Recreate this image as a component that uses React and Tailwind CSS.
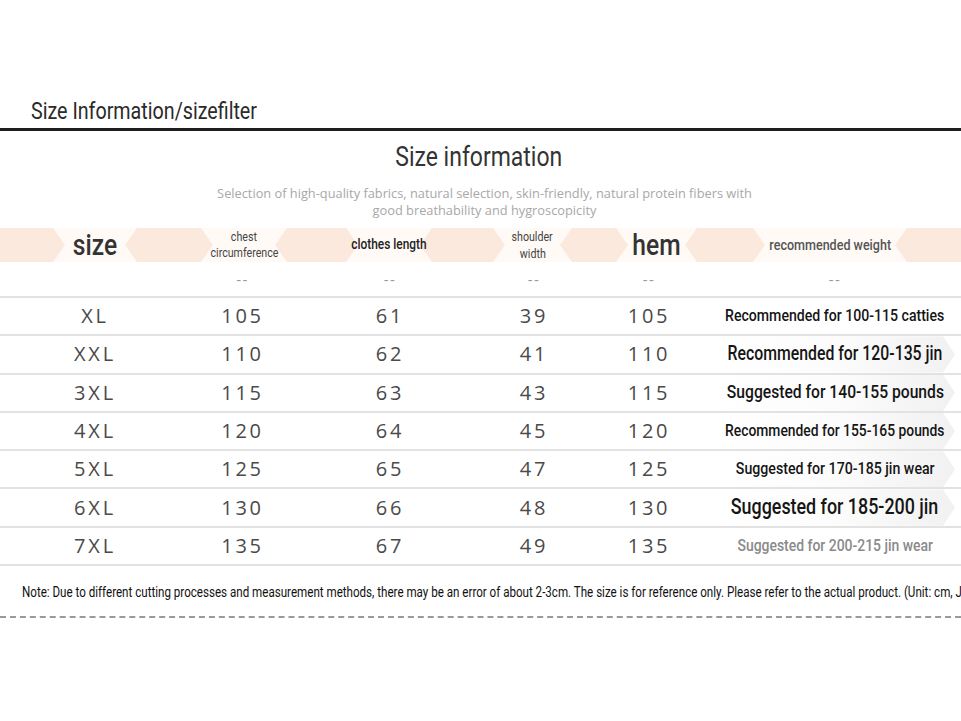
import React from "react";

const cond = "font-['Roboto','Liberation_Sans',sans-serif]";
const round = "font-['Open_Sans','DejaVu_Sans',sans-serif]";

const hex = "[clip-path:polygon(12px_0,calc(100%-12px)_0,100%_50%,calc(100%-12px)_100%,12px_100%,0_50%)]";

// condensed look: Roboto squeezed horizontally
const N = ({ className = "", origin = "origin-center", squeeze = "scale-x-[0.82]", children }) => (
  <span className={`inline-block whitespace-nowrap ${squeeze} ${origin} ${cond} ${className}`}>{children}</span>
);

const rows = [
  { size: "XL", chest: "105", length: "61", shoulder: "39", hem: "105", weight: "Recommended for 100-115 catties", cls: "text-[17.2px]" },
  { size: "XXL", chest: "110", length: "62", shoulder: "41", hem: "110", weight: "Recommended for 120-135 jin", cls: "text-[19.3px]" },
  { size: "3XL", chest: "115", length: "63", shoulder: "43", hem: "115", weight: "Suggested for 140-155 pounds", cls: "text-[19.1px]" },
  { size: "4XL", chest: "120", length: "64", shoulder: "45", hem: "120", weight: "Recommended for 155-165 pounds", cls: "text-[16.9px]" },
  { size: "5XL", chest: "125", length: "65", shoulder: "47", hem: "125", weight: "Suggested for 170-185 jin wear", cls: "text-[17.3px]" },
  { size: "6XL", chest: "130", length: "66", shoulder: "48", hem: "130", weight: "Suggested for 185-200 jin", cls: "text-[21.8px]" },
  { size: "7XL", chest: "135", length: "67", shoulder: "49", hem: "135", weight: "Suggested for 200-215 jin wear", cls: "text-[17px] !text-[#8a8a8a]" },
];

const cols = "grid grid-cols-[190px_105px_190px_98px_132px_240px_6px]";
const num = `${round} text-center text-[20px] tracking-[0.14em] text-[#4a4a4a]`;

const HeaderBand = () => (
  <div className="flex h-[34px] bg-[#fffaf6]">
    <div className="w-[65px] shrink-0 bg-[#fbe9dd] [clip-path:polygon(0_0,calc(100%-12px)_0,100%_50%,calc(100%-12px)_100%,0_100%)]" />
    <div className="relative z-10 w-[60px] shrink-0 flex items-center justify-center">
      <N className="text-[30px] font-medium text-[#333] leading-none">size</N>
    </div>
    <div className={`w-[88px] shrink-0 bg-[#fbe9dd] ${hex}`} />
    <div className="relative z-10 w-[62px] shrink-0 flex flex-col items-center justify-center leading-[16px]">
      <N className="text-[13px] text-[#444]">chest</N>
      <N className="text-[13px] text-[#444]">circumference</N>
    </div>
    <div className={`w-[83px] shrink-0 bg-[#fbe9dd] ${hex}`} />
    <div className="relative z-10 w-[62px] shrink-0 flex items-center justify-center">
      <N className="text-[14.5px] font-medium text-[#222]">clothes length</N>
    </div>
    <div className={`w-[85px] shrink-0 bg-[#fbe9dd] ${hex}`} />
    <div className="relative z-10 w-[55px] shrink-0 flex flex-col items-center justify-center leading-[17px]">
      <N className="text-[13px] text-[#444]">shoulder</N>
      <N className="text-[13px] text-[#444]">width</N>
    </div>
    <div className={`w-[68px] shrink-0 bg-[#fbe9dd] ${hex}`} />
    <div className="relative z-10 w-[57px] shrink-0 flex items-center justify-center">
      <N className="text-[30px] font-medium text-[#333] leading-none">hem</N>
    </div>
    <div className={`w-[80px] shrink-0 bg-[#fbe9dd] ${hex}`} />
    <div className="relative z-10 w-[130px] shrink-0 flex items-center justify-center">
      <N className="text-[15.3px] font-medium text-[#555]">recommended weight</N>
    </div>
    <div className="w-[66px] shrink-0 bg-[#fbe9dd] [clip-path:polygon(12px_0,100%_0,100%_100%,12px_100%,0_50%)]" />
  </div>
);

export default function App() {
  return (
    <div className="w-[961px] h-[721px] bg-white overflow-hidden">
      <div className="h-[128px] flex items-end pl-[31px] pb-[5px]">
        <N origin="origin-left" className="text-[24px] text-[#2a2a2a] leading-none">Size Information/sizefilter</N>
      </div>
      <div className="h-[3px] bg-[#1e1e1e]" />

      <div className="h-[97px] flex flex-col items-center pt-[12px]">
        <N className="text-[28px] text-[#333] leading-none ml-[-4px]">Size information</N>
        <p className={`${round} mt-[14px] text-[12.8px] leading-[17px] text-[#a8a8a8] text-center ml-[8px]`}>
          Selection of high-quality fabrics, natural selection, skin-friendly, natural protein fibers with
          <br />
          good breathability and hygroscopicity
        </p>
      </div>

      <HeaderBand />

      <div className={`${cols} h-[36px] items-center border-b-2 border-[#e2e2e2] ${round} text-[15px] text-[#9a9a9a] tracking-[0.1em]`}>
        <span />
        <span className="text-center">--</span>
        <span className="text-center">--</span>
        <span className="text-center">--</span>
        <span className="text-center">--</span>
        <span className="text-center">--</span>
      </div>

      {rows.map((r, i) => (
        <div key={r.size} className={`${cols} h-[38.3px] items-center border-b-2 border-[#e2e2e2]`}>
          <span className={num}>{r.size}</span>
          <span className={num}>{r.chest}</span>
          <span className={num}>{r.length}</span>
          <span className={num}>{r.shoulder}</span>
          <span className={num}>{r.hem}</span>
          <div className="h-full grid grid-cols-1">
            {i > 0 && i < 6 && (
              <div className={`[grid-area:1/1] bg-gradient-to-r from-white via-[#fcfcfc] to-[#f1f1f1] ${hex}`} />
            )}
            <div className="[grid-area:1/1] flex items-center justify-center">
              <N className={`font-medium text-[#151515] ${r.cls}`}>{r.weight}</N>
            </div>
          </div>
          <span />
        </div>
      ))}

      <div className="h-[50px] flex items-center pt-[3px] pl-[22px] overflow-hidden">
        <N origin="origin-left" squeeze="scale-x-[0.773]" className="text-[15px] text-[#111]">
          Note: Due to different cutting processes and measurement methods, there may be an error of about 2-3cm. The size is for reference only. Please refer to the actual product. (Unit: cm, Jin)
        </N>
      </div>
      <div className="border-t-2 border-dashed border-[#9a9a9a]" />
    </div>
  );
}
